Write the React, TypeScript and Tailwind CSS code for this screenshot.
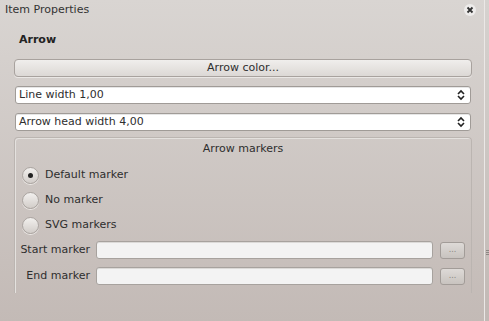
import React from 'react';

function UpDown() {
  return (
    <svg width="10" height="12" viewBox="0 0 10 12" className="text-[#222]">
      <path d="M2 5 L5 2 L8 5" fill="none" stroke="currentColor" strokeWidth="1.6" />
      <path d="M2 7 L5 10 L8 7" fill="none" stroke="currentColor" strokeWidth="1.6" />
    </svg>
  );
}

function Combo({ label }: { label: string }) {
  return (
    <div className="ml-[15px] w-[456px] h-[18px] bg-white border border-[#a09b97] rounded-[3px] flex items-center justify-between pl-[3px] pr-[4px] shadow-[inset_0_1px_0_#e6e6e6]">
      <span>{label}</span>
      <UpDown />
    </div>
  );
}

function Radio({ label, checked }: { label: string; checked?: boolean }) {
  return (
    <div className="flex items-center h-[25px] pl-[7px]">
      <div className="w-[17px] h-[17px] rounded-full border border-[#aaa4a0] bg-gradient-to-b from-[#f2f0ee] to-[#d2cdc9] flex items-center justify-center shadow-[0_1px_0_#ece9e6]">
        {checked && <div className="w-[5px] h-[5px] rounded-full bg-[#222]" />}
      </div>
      <span className="ml-[6px]">{label}</span>
    </div>
  );
}

function MarkerRow({ label }: { label: string }) {
  return (
    <div className="flex items-center h-[26px]">
      <div className="w-[75px] text-right">{label}</div>
      <div className="ml-[6px] w-[337px] h-[18px] bg-[#f3f3f3] border border-[#a7a29e] rounded-[3px] shadow-[inset_0_1px_0_#dcdad8]" />
      <div className="ml-[7px] w-[25px] h-[17px] rounded-[3px] border border-[#a29c98] bg-gradient-to-b from-[#dedad7] to-[#c8c3bf] flex items-center justify-center text-[#8a8581] text-[8px] leading-none">
        ...
      </div>
    </div>
  );
}

export default function App() {
  return (
    <div
      className="w-[489px] h-[321px] flex overflow-hidden text-[11px] text-[#2e2e2e]"
      style={{ fontFamily: '"DejaVu Sans", sans-serif' }}
    >
      <div className="w-[485px] h-full flex flex-col border-r border-[#ebe8e6] bg-gradient-to-b from-[#d9d5d2] to-[#c3bab6]">
        <div className="h-[19px] flex items-center justify-between pl-[5px] pr-[8px] pt-[1px] text-[#333]">
          <span>Item Properties</span>
          <svg width="12" height="12" viewBox="0 0 12 12">
            <circle cx="6" cy="6" r="6" fill="#eeeceb" />
            <path d="M3.5 3.5 L8.5 8.5 M8.5 3.5 L3.5 8.5" stroke="#333" strokeWidth="1.8" />
          </svg>
        </div>
        <div className="mt-[12px] h-[18px] flex items-center pl-[19px] font-bold text-[#222]">Arrow</div>
        <div className="mt-[10px] ml-[14px] w-[458px] h-[18px] rounded-[4px] border border-[#a8a29e] bg-gradient-to-b from-[#f0eeec] to-[#dcd8d5] flex items-center justify-center shadow-[0_1px_0_#eae7e5]">
          Arrow color...
        </div>
        <div className="mt-[9px]">
          <Combo label="Line width 1,00" />
        </div>
        <div className="mt-[9px]">
          <Combo label="Arrow head width 4,00" />
        </div>
        <div className="mt-[6px] ml-[14px] w-[458px] h-[156px] rounded-t-[4px] border-t border-l border-r border-[#bbb5b1] shadow-[inset_1px_1px_0_#e4e1de] flex flex-col">
          <div className="h-[21px] flex items-center justify-center pt-[1px]">Arrow markers</div>
          <div className="mt-[4px]">
            <Radio label="Default marker" checked />
            <Radio label="No marker" />
            <Radio label="SVG markers" />
          </div>
          <div className="-mt-[1px]">
            <MarkerRow label="Start marker" />
            <MarkerRow label="End marker" />
          </div>
        </div>
      </div>
      <div className="flex-1 h-full bg-gradient-to-b from-[#d6d2cf] to-[#c2b9b5] flex flex-col items-center pt-[250px]">
        <div className="w-[3px] h-[1px] bg-[#8d8784]" />
        <div className="w-[3px] h-[1px] bg-[#8d8784] mt-[1px]" />
        <div className="w-[3px] h-[1px] bg-[#8d8784] mt-[1px]" />
      </div>
    </div>
  );
}
